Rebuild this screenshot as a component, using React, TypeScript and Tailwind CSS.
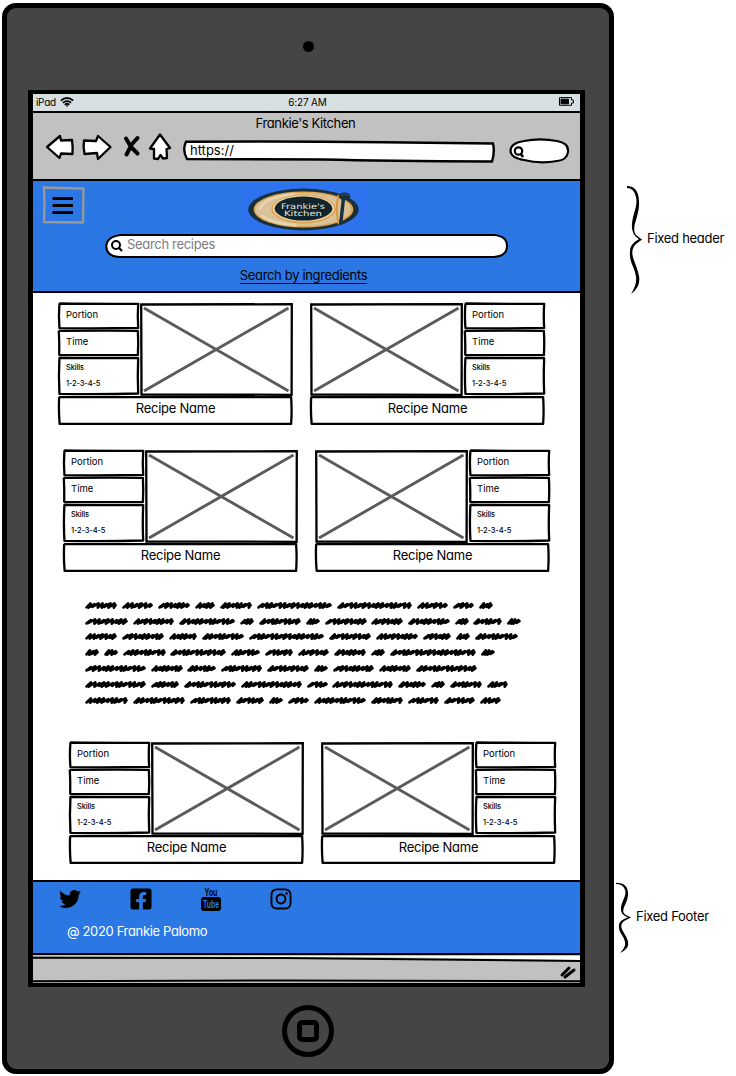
import React from "react";
import { FaTwitter, FaFacebookSquare, FaInstagram } from "react-icons/fa";

const SANS = "font-['Inter','Noto_Sans',sans-serif] [font-feature-settings:'cv11']";

const outlines = [
  "M1.5 2 Q40 3.5 99 3 Q98 50 99 96 Q55 98.5 1.8 97 Q.5 50 1.8 1",
  "M1 3.5 Q50 2 98.6 3 Q99.5 50 98.6 97 Q50 97 1.5 95.5 Q1.8 50 1 2",
  "M.5 4 Q40 4.5 99.2 4 Q99.6 50 99.2 96 Q50 95.5 .7 96 Q.2 50 .5 3",
];

function Sketch({ children, className = "", kind = 0 }: { children?: React.ReactNode; className?: string; kind?: number }) {
  return (
    <div className={`relative ${className}`}>
      <svg className="absolute inset-0 h-full w-full overflow-visible" viewBox="0 0 100 100" preserveAspectRatio="none">
        <path d={outlines[kind]} fill="white" stroke="black" strokeWidth="2.3" strokeLinejoin="round" vectorEffect="non-scaling-stroke" />
      </svg>
      <div className="relative">{children}</div>
    </div>
  );
}

function Photo() {
  return (
    <svg className="h-[93px] w-[153px] shrink-0" viewBox="0 0 153 93" fill="none">
      <path d="M1.2 1.5L151.8 1.2L151.6 91.8L1.5 91.5Z" stroke="black" strokeWidth="2.3" />
      <path d="M4 5L148.5 88M4 88L148.5 5" stroke="#5b5b5b" strokeWidth="2.9" />
    </svg>
  );
}

function Recipe({ flip = false }: { flip?: boolean }) {
  return (
    <div className="flex h-[122px] w-[235px] flex-col">
      <div className={`flex h-[93px] justify-between ${flip ? "flex-row-reverse" : ""}`}>
        <div className="flex w-[81px] flex-col gap-[1px]">
          <Sketch className="h-[26px] pt-[5px] pl-2 text-[9.5px] leading-[13px]">Portion</Sketch>
          <Sketch kind={1} className="h-[26px] pt-[5px] pl-2 text-[9.5px] leading-[13px]">Time</Sketch>
          <Sketch className="h-[38px] pt-[3px] pl-2 text-[7.5px] leading-4 font-medium tracking-[-0.15px]">
            <div>Skills</div>
            <div>1-2-3-4-5</div>
          </Sketch>
        </div>
        <Photo />
      </div>
      <Sketch kind={2} className="h-[29px] pt-[4px] text-center text-[13px] leading-[16px] tracking-[-0.25px]">Recipe Name</Sketch>
    </div>
  );
}

const words: number[][] = [
  [85, 117, 122, 153, 158, 190, 195, 215, 220, 252, 257, 332, 337, 412, 417, 448, 453, 474, 479, 493],
  [85, 128, 133, 174, 179, 235, 240, 254, 259, 301, 306, 320, 325, 367, 371, 403, 408, 450, 455, 469, 473, 502, 507, 521],
  [85, 117, 122, 164, 169, 197, 202, 244, 249, 324, 329, 371, 376, 418, 423, 451, 456, 470, 475, 518],
  [85, 99, 104, 118, 123, 166, 170, 226, 231, 260, 265, 293, 298, 329, 334, 366, 371, 385, 390, 476, 481, 495],
  [85, 146, 151, 183, 187, 216, 221, 262, 267, 309, 314, 328, 333, 374, 379, 411, 416, 477],
  [85, 146, 151, 179, 184, 236, 241, 302, 307, 328, 332, 393, 398, 426, 431, 445, 450, 482, 487, 508],
  [85, 128, 133, 185, 190, 231, 236, 264, 269, 283, 288, 309, 314, 366, 371, 403, 408, 439, 444, 475, 480, 501],
];

function squiggle(a: number, b: number, seed: number) {
  const steps = Math.max(3, Math.round((b - a - 3) / 4.4));
  const w = (b - a - 4) / steps;
  let d = `M${a + 1.5} 6.4`;
  for (let i = 0; i < steps; i++) {
    const x = a + 1.5 + i * w;
    const lift = (i + seed) % 3 === 1 ? 0.8 : 0;
    const back = (i + seed) % 4 < 2 ? 0.45 : 0.8;
    d += `L${x + w} ${2.4 + lift}L${x + w * back} ${6.6 - lift}`;
  }
  return d + `L${b - 1.5} 4.2`;
}

function Scribbles() {
  return (
    <div className="flex flex-col">
      {words.map((row, r) => (
        <svg key={r} className="h-[15.8px] w-[440px]" viewBox="84 0 440 15.8" fill="none" stroke="black" strokeWidth="2.7" strokeLinecap="round" strokeLinejoin="round">
          {row.map((x, i) => (i % 2 === 0 ? <path key={i} d={squiggle(x, row[i + 1], i + r)} /> : null))}
        </svg>
      ))}
    </div>
  );
}

function StatusBar() {
  return (
    <div className="flex h-[19px] items-center justify-between border-b-2 border-black bg-[#d8dfe2] pr-[6px] pb-px pl-[3px] text-[10px] leading-none">
      <div className="flex w-[60px] items-center gap-[4px]">
        <span className="tracking-[-0.3px]">iPad</span>
        <svg width="14" height="10" viewBox="0 0 14 10" fill="none" stroke="black" strokeWidth="1.8">
          <path d="M.8 3.6Q7-1.5 13.2 3.6M2.9 5.8Q7 2.4 11.1 5.8M4.8 7.8Q7 5.8 9.2 7.8" />
          <circle cx="7" cy="8.9" r=".8" fill="black" stroke="none" />
        </svg>
      </div>
      <span className="pl-[5px] tracking-[-0.15px]">6:27 AM</span>
      <div className="flex w-[60px] justify-end">
        <svg width="15" height="9" viewBox="0 0 15 9" fill="none" stroke="black">
          <path d="M.5.6H12.5V3H14.4V6H12.5V8.3H.5Z" />
          <path d="M2 2.2H9.5V6.8H2Z" fill="black" />
        </svg>
      </div>
    </div>
  );
}

function BrowserBar() {
  return (
    <div className="h-[68px] border-b-2 border-black bg-[#c1c1c1]">
      <div className="pt-[2px] pr-[2px] text-center text-[13px] leading-[17px] tracking-[-0.38px]">Frankie's Kitchen</div>
      <div className="flex">
        <svg className="h-[34px] w-[144px] shrink-0" viewBox="33 132 144 34" fill="white" stroke="black" strokeWidth="2.3" strokeLinejoin="round">
          <path d="M47 147L60 136L61 140.5L72 140Q73 147 72.5 154L61 153.5L59.5 158Z" />
          <path d="M84 140.5L96 141L98 136L110.5 147L98 159L97 153L84.5 154Q83 147 84 140.5Z" />
          <path d="M126 138.5L131 147L137.5 153.5M137.5 138L132 144L126.5 154.5" strokeWidth="4" strokeLinecap="round" fill="none" />
          <path d="M160 134.5L170 148L166.5 149L167 158L163 158.5L160.5 155L158 159L154 158.5L154 149L150 148.5Z" />
        </svg>
        <div className="relative mt-[8px] ml-[6px] h-[23px] w-[312px]">
          <svg className="absolute inset-0" width="312" height="23" viewBox="0 0 312 23">
            <path d="M3 1.8Q100 1 200 2.2L310 3.5Q312 12 309 21.5Q200 21 140 19.5L4 19Q-1 10 3 1.8Z" fill="white" stroke="black" strokeWidth="2.4" />
          </svg>
          <span className="relative block pt-[2px] pl-[7px] text-[13px] leading-[17px]">https://</span>
        </div>
        <svg className="mt-[6px] ml-[14px]" width="61" height="26" viewBox="0 0 61 26" fill="white" stroke="black" strokeWidth="2.2">
          <path d="M15 3Q31-.2 48 3Q60 5 59 14Q58 22 48 23Q31 26 15 22Q2 20 1.5 13Q1.5 5 15 3Z" />
          <circle cx="9.5" cy="13" r="3.7" strokeWidth="2.2" />
          <path d="M11.5 15.5L14 19" strokeWidth="2.6" />
        </svg>
      </div>
    </div>
  );
}

function Logo() {
  return (
    <div className="-ml-[4px] flex h-[50px] w-[126px] justify-center bg-[#2f72ed] pt-[4px]">
      <svg className="-ml-[3px]" width="113" height="43" viewBox="0 0 114 44">
        <ellipse cx="57" cy="22" rx="56.5" ry="21.4" fill="#18303b" />
        <ellipse cx="57" cy="22" rx="51" ry="18.5" fill="#dfa755" />
        <ellipse cx="56.5" cy="22" rx="49" ry="17" fill="#d9c19a" />
        <path d="M12 22Q16 9 48 6.5M14 28Q24 36 50 38" fill="none" stroke="#e6d3b0" strokeWidth="3" />
        <ellipse cx="57" cy="21.5" rx="33" ry="15" fill="#dda553" />
        <ellipse cx="57" cy="21" rx="31.5" ry="13.6" fill="#ecd09b" />
        <ellipse cx="57" cy="21" rx="29.5" ry="12.3" fill="#11242d" />
        <path d="M93 7Q89 22 93 37" fill="none" stroke="#d8983f" strokeWidth="2" />
        <path d="M98 10L95 37" stroke="#18303b" strokeWidth="3.5" />
        <ellipse cx="99" cy="8.5" rx="5.8" ry="4" fill="#18303b" />
        <path d="M95.5 8Q99 5.5 103 7.5" fill="none" stroke="#3f5b69" />
        <g className="font-['DejaVu_Sans',sans-serif]" fill="#e6e8df" fontSize="7.8">
          <text x="34" y="21" textLength="45" lengthAdjust="spacingAndGlyphs">Frankie's</text>
          <text x="37" y="29" textLength="39" lengthAdjust="spacingAndGlyphs">Kitchen</text>
        </g>
      </svg>
    </div>
  );
}

function Header() {
  return (
    <header className="relative flex h-[112px] flex-col items-center border-b-[2px] border-black bg-[#2b78e4] pt-[3px]">
      <svg className="absolute top-[5px] left-[9px]" width="44" height="40" viewBox="0 0 44 40" fill="none">
        <path d="M2 1.5L41.5 2.5L41 36.5L2 36Q3 18 2 1.5Z" stroke="#999" strokeWidth="2.3" />
        <path d="M10.5 12.5H31M10.5 19.5H31M10.5 26.5H31" stroke="black" strokeWidth="3.1" />
      </svg>
      <Logo />
      <div className="relative -mt-[1px] h-[26px] w-[404px]">
        <svg className="absolute inset-0" width="404" height="26" viewBox="0 0 404 26">
          <path d="M14 2H389Q402 3 402 13T389 24H14Q1 23 1.3 13Q2 3 17 2" fill="white" stroke="black" strokeWidth="2" />
          <circle cx="11" cy="12" r="4" fill="none" stroke="black" strokeWidth="2" />
          <path d="M14 15L17 18" stroke="black" strokeWidth="2.3" />
        </svg>
        <span className="relative block pt-[3px] pl-[22.5px] text-[13px] leading-[17px] tracking-[-0.32px] text-[#7b7b83]">Search recipes</span>
      </div>
      <a className="mt-[8px] mr-[6px] text-[13px] leading-[17px] tracking-[-0.33px] underline underline-offset-[3px]">Search by ingredients</a>
    </header>
  );
}

function Footer() {
  return (
    <footer className="h-[75px] border-y-2 border-black bg-[#2b78e4]">
      <div className="flex h-[34px] items-center pl-[26px]">
        <FaTwitter className="size-[22px]" />
        <FaFacebookSquare className="ml-[48px] size-[24px]" />
        <svg className="ml-[47px] h-[30px] w-[22px] overflow-visible" viewBox="0 -2 22 30">
          <rect x="1" y="11" width="20" height="14" rx="3" />
          <g className="font-['Liberation_Sans',sans-serif]" fontWeight="bold">
            <text x="4.5" y="9.5" fontSize="11.5" textLength="13" lengthAdjust="spacingAndGlyphs">You</text>
            <text x="3" y="22" fontSize="10.5" fill="#2b78e4" textLength="16" lengthAdjust="spacingAndGlyphs">Tube</text>
          </g>
        </svg>
        <FaInstagram className="ml-[47px] size-[24px]" />
      </div>
      <div className="mt-[6px] pl-[34px] text-[13px] leading-[18px] tracking-[-0.35px] text-white">@ 2020 Frankie Palomo</div>
    </footer>
  );
}

function Brace({ short = false }: { short?: boolean }) {
  return (
    <svg className={short ? "h-[71px] w-[16px]" : "h-[109px] w-[16px]"} viewBox="0 0 16 109" preserveAspectRatio="none">
      <path d="M0 1Q13 1 12 21C11 34 4 43 9 50L15 54.5L9 59C0 68 10 78 12 91Q14 102 4 109Q10 100 9 92C8 82 2 78 3 66Q3 59 12 54Q4 50 5 39C6 28 11 21 9 12Q7 3 0 3Z" />
    </svg>
  );
}

export default function App() {
  return (
    <div className={`flex h-[1076px] w-[736px] overflow-hidden bg-white pt-[3px] pl-[2px] text-black ${SANS}`}>
      <div className="flex h-[1071px] w-[612px] shrink-0 flex-col items-center rounded-[14px] border-[5px] border-black bg-[#454545]">
        <div className="mt-[33px] size-[11px] rounded-full bg-black" />
        <div className="mt-[38px] -ml-[3px] flex h-[897px] w-[557px] shrink-0 flex-col border-[5px] border-y-4 border-black bg-white">
          <StatusBar />
          <BrowserBar />
          <Header />
          <main className="h-[588px] pt-[10px]">
            <div className="flex gap-[17px] pl-[25px]">
              <Recipe />
              <Recipe flip />
            </div>
            <div className="mt-[25px] flex gap-[17px] pl-[30px]">
              <Recipe />
              <Recipe flip />
            </div>
            <div className="mt-[29px] pl-[51px]">
              <Scribbles />
            </div>
            <div className="mt-[30.4px] flex gap-[17px] pl-[36px]">
              <Recipe />
              <Recipe flip />
            </div>
          </main>
          <Footer />
          <div className="flex flex-1 items-end justify-end bg-[#c1c1c1]">
            <svg width="547" height="28" viewBox="0 0 547 28">
              <path d="M0 1H547V5L350 2L0 1Z" fill="white" />
              <path d="M0 2.8L250 3L547 6M0 26.2L250 25.4L547 26.2" fill="none" stroke="black" strokeWidth="2" />
              <path d="M529 20L536 13M532 22L541 15" stroke="black" strokeWidth="3" strokeLinecap="round" />
            </svg>
          </div>
        </div>
        <div className="mt-[18px] flex size-[52px] shrink-0 items-center justify-center rounded-full border-[5px] border-black">
          <div className="size-[22px] rounded-[5px] border-[5px] border-black" />
        </div>
      </div>
      <aside className="flex shrink-0 flex-col text-[13px] tracking-[-0.28px] whitespace-nowrap">
        <div className="mt-[182px] ml-[13px] flex items-center gap-[4px]">
          <Brace />
          <span className="-mt-px">Fixed header</span>
        </div>
        <div className="mt-[588px] ml-[2px] flex items-center gap-[4px]">
          <Brace short />
          <span className="-mt-px">Fixed Footer</span>
        </div>
      </aside>
    </div>
  );
}
